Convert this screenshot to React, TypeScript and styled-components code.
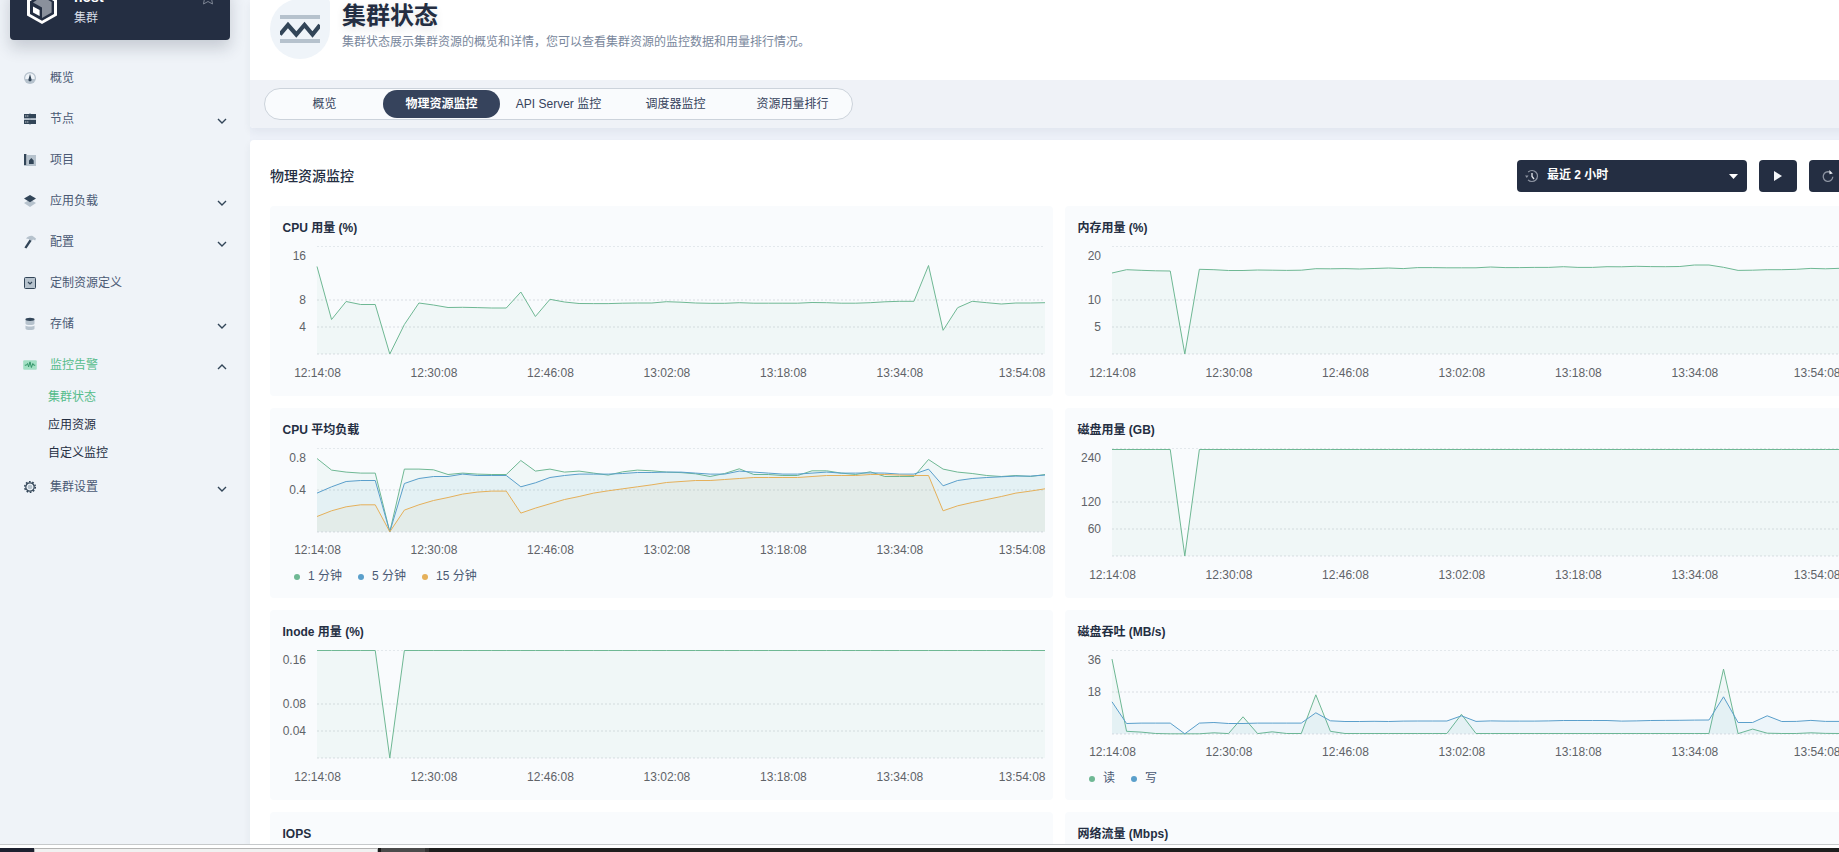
import React from "react";
import styled, { createGlobalStyle, css } from "styled-components";

const GlobalStyle = createGlobalStyle`
  * { box-sizing: border-box; }
  html, body { margin: 0; padding: 0; overflow: hidden; }
  body {
    background: #edf1f9;
    color: #242e42;
    font-family: "Liberation Sans", "Noto Sans CJK SC", sans-serif;
    font-size: 12px;
    line-height: 20px;
  }
`;

const Screen = styled.div`
  display: flex;
  flex-direction: column;
  width: 1839px;
  height: 852px;
  overflow: hidden;
`;

const Workspace = styled.div`
  display: flex;
  height: 844px;
  overflow: hidden;
`;

/* ---------- sidebar ---------- */

const Sidebar = styled.aside`
  flex: 0 0 250px;
  background: #eff3f8;
`;

const ClusterCard = styled.div`
  display: flex;
  align-items: flex-start;
  gap: 16px;
  width: 220px;
  height: 53px;
  margin: -13px 0 17px 10px;
  padding: 0 16px 0 16px;
  border-radius: 4px;
  background: #242e42;
  box-shadow: 0 8px 16px rgba(36, 46, 66, 0.2);
`;

const ClusterNames = styled.div`
  display: flex;
  flex: 1;
  flex-direction: column;
  color: #d8dde6;
  > strong { color: #fff; font-size: 14px; line-height: 20px; }
  > span { line-height: 22px; }
`;

const NavList = styled.nav`
  display: flex;
  flex-direction: column;
`;

const NavItem = styled.a<{ $active?: boolean }>`
  display: flex;
  align-items: center;
  height: 41px;
  padding: 0 23px 0 22px;
  color: ${(p) => (p.$active ? "#55bc8a" : "#4a5974")};
  > span { flex: 1; margin-left: 12px; }
`;

const SubNav = styled.div`
  display: flex;
  flex-direction: column;
  margin: -2px 0 -1px;
  padding-left: 48px;
`;

const SubItem = styled.a<{ $active?: boolean }>`
  height: 28px;
  line-height: 29px;
  color: ${(p) => (p.$active ? "#55bc8a" : "#242e42")};
`;

const ChevronSvg = styled.svg<{ $up?: boolean }>`
  margin-top: 4px;
  ${(p) => p.$up && css`transform: rotate(180deg);`}
`;

/* ---------- main ---------- */

const Main = styled.main`
  display: flex;
  flex: 0 0 1618px;
  flex-direction: column;
  gap: 12px;
`;

const Banner = styled.header`
  height: 128px;
  border-radius: 0 0 4px 4px;
  background: #fff;
  box-shadow: 0 4px 8px rgba(36, 46, 66, 0.06);
`;

const BannerTop = styled.div`
  display: flex;
  gap: 12px;
  height: 80px;
  padding-left: 20px;
`;

const BannerIcon = styled.div`
  display: flex;
  align-items: center;
  justify-content: center;
  width: 60px;
  height: 60px;
  margin-top: -1px;
  border-radius: 50% 4px 50% 50%;
  background: #eff4f9;
`;

const BannerText = styled.div`
  display: flex;
  flex-direction: column;
  > h1 {
    margin: 0;
    font-size: 24px;
    font-weight: 700;
    line-height: 32px;
    text-shadow: 0 4px 8px rgba(36, 46, 66, 0.12);
  }
  > p { margin: 0; color: #79879c; }
`;

const TabStrip = styled.div`
  height: 48px;
  padding: 8px 14px;
  border-radius: 0 0 4px 4px;
  background: #eff2f7;
`;

const TabGroup = styled.div`
  display: inline-flex;
  height: 32px;
  padding: 1px;
  border: 1px solid #ccd3db;
  border-radius: 16px;
  background: #f9fbfd;
`;

const Tab = styled.button<{ $active?: boolean }>`
  width: 117px;
  height: 28px;
  padding: 0;
  border: 0;
  border-radius: 14px;
  background: ${(p) => (p.$active ? "#36435c" : "transparent")};
  color: ${(p) => (p.$active ? "#fff" : "#36435c")};
  font: inherit;
  font-weight: ${(p) => (p.$active ? 700 : 400)};
`;

const Panel = styled.section`
  flex: 1;
  padding: 20px;
  border-radius: 4px;
  background: #fff;
  box-shadow: 0 4px 8px rgba(36, 46, 66, 0.06);
`;

const PanelHead = styled.div`
  display: flex;
  align-items: center;
  gap: 12px;
  height: 32px;
  margin-bottom: 14px;
  padding-right: 1px;
  > h2 { flex: 1; margin: 0; font-size: 14px; font-weight: 500; }
`;

const DarkButton = styled.button`
  display: flex;
  align-items: center;
  justify-content: center;
  width: 38px;
  height: 32px;
  padding: 0;
  border: 0;
  border-radius: 4px;
  background: #242e42;
`;

const RangeSelect = styled(DarkButton)`
  width: 230px;
  padding: 0 9px 0 8px;
  color: #fff;
  font: inherit;
  font-weight: 700;
  > span { flex: 1; margin: -2px 0 0 8px; text-align: left; }
`;

const ChartGrid = styled.div`
  display: grid;
  grid-template-columns: 783px 783px;
  grid-auto-rows: 190px;
  gap: 12px;
`;

const ChartCard = styled.article`
  border-radius: 4px;
  background: #f9fbfd;
  > h3 {
    height: 36px;
    margin: 0;
    padding: 12px 12.5px 0;
    font-size: 12px;
    font-weight: 600;
    line-height: 20px;
  }
  > svg { display: block; }
`;

const Tick = styled.text`
  fill: #5f6368;
  font-size: 12px;
`;

const Legend = styled.div`
  display: flex;
  gap: 16px;
  padding-left: 24px;
  line-height: 24px;
  color: #4a5974;
`;

const LegendItem = styled.span<{ $color: string }>`
  display: flex;
  align-items: center;
  gap: 8px;
  &::before {
    content: "";
    width: 6px;
    height: 6px;
    margin-top: 2px;
    border-radius: 50%;
    background: ${(p) => p.$color};
  }
`;

/* ---------- desktop strip ---------- */

const WindowEdge = styled.div`
  height: 4px;
  border-top: 1px solid #c6c9cb;
  background: #fff;
`;

const Taskbar = styled.div`
  display: flex;
  height: 4px;
  background: #1e1e1e;
`;

const TaskSlot = styled.div<{ $w: number; $bg: string; $edge?: boolean }>`
  width: ${(p) => p.$w}px;
  background: ${(p) => p.$bg};
  ${(p) => p.$edge && css`border: 1px solid #b4b4b4; border-bottom: 0;`}
`;

/* ---------- icons ---------- */

const DARK = "#324558";
const PALE = "#b6c2cd";

const Chevron = ({ up }: { up?: boolean }) => (
  <ChevronSvg $up={up} width="10" height="8" viewBox="0 0 10 8" fill="none">
    <path d="M1 2l4 4 4-4" stroke={DARK} strokeWidth="1.4" />
  </ChevronSvg>
);

const navIcons: Record<string, React.ReactNode> = {
  overview: (
    <>
      <circle cx="8" cy="8" r="6" fill={PALE} />
      <path d="M3.3 9a4.8 4.8 0 1 1 9.4 0z" fill="#eef3f8" />
      <path d="M8 4l1.5 5.2a1.6 1.6 0 1 1-3 0z" fill={DARK} />
    </>
  ),
  node: (
    <>
      <path d="M7 2h2v12H7z" fill={PALE} />
      <path d="M2 3h12v4.4H2zM2 8.8h12v4.2H2z" fill={DARK} />
      <path d="M3.3 4.6h1v1h-1zM5.3 4.6h1v1h-1zM3.3 10.4h1v1h-1zM5.3 10.4h1v1h-1z" fill="#fff" />
      <path d="M2 7.4h12v1.3H2z" fill={PALE} />
    </>
  ),
  project: (
    <>
      <path d="M5 3h9v11H2v-1h3z" fill={PALE} />
      <path d="M2 2h2.4v11H2zM7 8.5L9.3 6l2.4 2.5V12H7z" fill={DARK} />
    </>
  ),
  workload: (
    <>
      <path d="M8 6.5l6 3.6-6 3.9-6-3.9z" fill={PALE} />
      <path d="M8 2l6 3.6L8 9.2 2 5.6z" fill={DARK} />
    </>
  ),
  config: (
    <>
      <path d="M4 4.5C6 2 9 1.4 11 2.2l3 2.2-.8 2L11 5.4 9.6 7 7.4 5.2z" fill={PALE} />
      <path d="M7.6 5.6l1.9 1.4L4.4 14.6 2.4 13.4z" fill={DARK} />
    </>
  ),
  crd: (
    <>
      <rect x="2.5" y="2.5" width="11" height="11" rx="1" fill={PALE} stroke={DARK} />
      <path d="M6 7l2 2 2-2" fill="none" stroke={DARK} strokeWidth="1.2" />
    </>
  ),
  storage: (
    <>
      <path d="M3.5 4v3.5c0 2 9 2 9 0V4zM3.5 9.5v3c0 2 9 2 9 0v-3c-1 1.4-8 1.4-9 0z" fill={PALE} />
      <ellipse cx="8" cy="3.3" rx="4.6" ry="1.6" fill={DARK} />
    </>
  ),
  monitor: (
    <>
      <rect x="1.2" y="3.2" width="13.6" height="9.6" rx="1" fill="#a2e0c4" />
      <path d="M2.8 8.2h1.6l1.2-1.7 1 3.4 1.4-5 1.4 5.6 1.4-4 .9 1.7h1.5" fill="none" stroke="#329568" strokeWidth="1" />
    </>
  ),
  settings: (
    <>
      <circle cx="8" cy="8" r="5.3" fill="none" stroke={DARK} strokeWidth="1.5" strokeDasharray="1.7 1.63" />
      <circle cx="8" cy="8" r="4.2" fill="#eff4f9" stroke={DARK} strokeWidth="1.2" />
      <circle cx="8" cy="8" r="2.3" fill={PALE} />
    </>
  ),
};

const ClusterLogo = () => (
  <svg width="32" height="40" viewBox="0 0 32 40">
    <path d="M16 4l15 8.4v16.2L16 37 1 28.6V12.4z" fill="#fff" />
    <path d="M16 7.5l12 6.7v12.9l-12 6.7-12-6.7V14.2z" fill="#242e42" />
    <path d="M16 9.5l9.6 5.4v10.7L16 31V20.5l-9-5z" fill="#8a909c" />
    <path d="M7 19.5l6.6 3.5v6L7 25.6z" fill="#fff" />
  </svg>
);

const StarSvg = styled.svg`
  margin-top: 6px;
`;

const Star = () => (
  <StarSvg width="12" height="12" viewBox="0 0 12 12">
    <path d="M0 3.5h3.5M12 3.5H8.5M2.5 5.5L1.5 11 6 8.5l4.5 2.5-1-5.5" fill="none" stroke="#7d8594" />
  </StarSvg>
);

const BannerGlyph = () => (
  <svg width="40" height="40" viewBox="0 0 40 40">
    <path d="M0 6h40v4H0zM0 30h40v4H0z" fill={PALE} />
    <path d="M0 25.5L8 16l8.3 9.5L24.5 16l8 9.5L40 16" fill="none" stroke={DARK} strokeWidth="4.2" />
  </svg>
);

const HistoryIcon = () => (
  <svg width="14" height="14" viewBox="0 0 14 14" fill="none">
    <path d="M3.2 3A5.5 5.5 0 1 1 3 10.800" stroke="#8d94a2" strokeWidth="1.2" />
    <path d="M0 6.5h3.6L1.8 9z" fill="#8d94a2" />
    <path d="M7 4v3.5l2 2.5" stroke="#e6e9ee" strokeWidth="1.3" />
  </svg>
);

const CaretIcon = () => (
  <svg width="9" height="5" viewBox="0 0 9 5">
    <path d="M0 0h9L4.5 5z" fill="#fff" />
  </svg>
);

const PlayIcon = () => (
  <svg width="8" height="10" viewBox="0 0 8 10">
    <path d="M0 0l8 5-8 5z" fill="#f4f6f9" />
  </svg>
);

const RefreshIcon = () => (
  <svg width="12" height="14" viewBox="0 0 12 14" fill="none">
    <path d="M8 3.2A4.8 4.8 0 1 0 10.8 7.8" stroke="#8d94a2" strokeWidth="1.3" />
    <path d="M7.3 1l3.5 3.6-3.3.6z" fill="#e6e9ee" />
  </svg>
);

/* ---------- data ---------- */

const GREEN = "#6fb894";
const BLUE = "#5a9fcb";
const ORANGE = "#e5b05a";

type Series = { color: string; fill: string; points: number[] };
type ChartSpec = { title: string; ticks: string[]; series: Series[]; legend?: string[] };

const fillRun = (n: number, v: number) => Array.from({ length: n }, () => v);
const green = (points: number[]): Series => ({ color: GREEN, fill: "rgba(85,188,138,0.055)", points });
const blue = (points: number[]): Series => ({ color: BLUE, fill: "rgba(50,145,200,0.06)", points });
const orange = (points: number[]): Series => ({ color: ORANGE, fill: "rgba(229,176,60,0.06)", points });

const charts: ChartSpec[] = [
  {
    title: "CPU 用量 (%)",
    ticks: ["16", "8", "4"],
    series: [green([
      87.5, 34.5, 52.5, 49.5, 49.5, 0, 29.5, 51, 49, 46.5, 46.7, 46.4, 46, 46, 62, 37.5, 54.7, 52, 50.5, 50.4, 50.4,
      50.8, 51, 51, 52.3, 51.8, 51, 50.7, 50.7, 51.3, 50.8, 50.8, 50.8, 50.8, 51.5, 51.3, 50.8, 50.8, 51.3, 52.2,
      52.7, 52.7, 88.5, 23.7, 46.3, 52.7, 51.3, 50, 51, 51, 51.3,
    ])],
  },
  {
    title: "内存用量 (%)",
    ticks: ["20", "10", "5"],
    series: [green([
      81, 84.3, 83.7, 83.2, 83, 0, 84.7, 84.3, 83.5, 83.5, 84, 83.8, 83.6, 83.8, 85.3, 85.2, 85.4, 85, 85.5, 86, 85.4,
      86.4, 86.4, 86.2, 86.2, 86.2, 87, 86.4, 86.4, 86.6, 86.6, 87.3, 86.6, 86.6, 87.3, 87.2, 87.7, 87.4, 87.3,
      87.5, 89, 89, 86.7, 83.6, 83.8, 84.3, 84.3, 84.7, 85.6, 85.2, 85.7,
    ])],
  },
  {
    title: "CPU 平均负载",
    ticks: ["0.8", "0.4"],
    legend: ["1 分钟", "5 分钟", "15 分钟"],
    series: [
      green([
        73.3, 61.7, 59.7, 58.7, 58.7, 0, 62.7, 62.7, 62, 57.3, 58.7, 57.7, 57.3, 57.3, 71.3, 60.7, 62.7, 59.7, 60.7,
        58.7, 56.7, 60, 61.7, 61, 59.7, 59.2, 58, 55.3, 58.3, 63, 57.3, 57.3, 56.3, 56.3, 61, 61, 58.7, 57.3,
        60, 55.3, 55.3, 55.3, 72.3, 62.7, 59.7, 58.3, 56.3, 55.3, 56.3, 55.3, 57.3,
      ]),
      blue([
        38.7, 45, 50.3, 51.3, 51.3, 0, 48.3, 53.3, 55.3, 55.3, 57.7, 56.3, 56.3, 56.3, 45, 49, 54.3, 56.3, 57.7, 57.7,
        57.7, 58.3, 59.3, 59.3, 59.7, 59.7, 58.7, 57.7, 57.7, 60.7, 59.7, 58.7, 57.7, 57.7, 58.7, 59.7, 58.7, 58.7,
        58.9, 58.7, 57.7, 57.7, 62.7, 46, 51.3, 53.3, 54.3, 55, 55.7, 55.7, 56.7,
      ]),
      orange([
        15.3, 21, 25, 27, 27, 0, 21.7, 27, 31.3, 34.3, 37.7, 39.7, 40.7, 40.7, 18.7, 23.7, 28, 32.3, 35.3, 38.7, 41,
        43, 45, 47, 49.3, 50.3, 51.3, 51.3, 52.3, 53.3, 54.3, 54.3, 54.3, 54.3, 55.3, 56.3, 56.3, 56.3, 57.3, 57.3,
        56.7, 56.3, 56.3, 21, 26, 29.3, 32.3, 35.3, 38.7, 40.7, 43,
      ]),
    ],
  },
  {
    title: "磁盘用量 (GB)",
    ticks: ["240", "120", "60"],
    series: [green([...fillRun(5, 106.5), 0, ...fillRun(45, 106.5)])],
  },
  {
    title: "Inode 用量 (%)",
    ticks: ["0.16", "0.08", "0.04"],
    series: [green([...fillRun(5, 107.5), 0, ...fillRun(45, 107.5)])],
  },
  {
    title: "磁盘吞吐 (MB/s)",
    ticks: ["36", "18"],
    legend: ["读", "写"],
    series: [
      green([
        74.7, 2.5, 1.7, 0.3, 0, 0, 0, 1, 0.2, 17, 0.2, 2, 0.3, 0.3, 39, 2.5, ...fillRun(8, 0.3), 19.5,
        ...fillRun(17, 0.3), 64.7, 0.2, 4.7, 0.6, 0.3, 0.3, 1, 0.4, 0.3,
      ]),
      blue([
        32, 10.3, 10.7, 10.7, 10.7, 0, 10.7, 11.3, 10.3, 10.3, 10.7, 10.7, 10.7, 10.7, 21, 13, 12.3, 12.3, 12.5, 12.3,
        12.7, 12.8, 12.8, 12.8, 18, 12.4, 12.9, 12.7, 12.7, 12.7, 12.9, 13.3, 13.3, 13.3, 13.3, 12.7, 12.9, 13.3, 13.4,
        13.5, 13.7, 13.8, 37, 11.3, 11.3, 18, 12.3, 12.4, 13.4, 12.4, 12.4,
      ]),
    ],
  },
  { title: "IOPS", ticks: [], series: [] },
  { title: "网络流量 (Mbps)", ticks: [], series: [] },
];

const LEFT = 47;
const RIGHT = 775;
const STEP = (RIGHT - LEFT) / 50;
const TOP = 4.5;
const timeLabels = ["12:14:08", "12:30:08", "12:46:08", "13:02:08", "13:18:08", "13:34:08"];

const AreaChart = ({ spec }: { spec: ChartSpec }) => {
  const base = spec.legend ? 87.8 : 112;
  const span = base - 4;
  const gridLines = spec.legend ? [TOP, 46, 88] : [TOP, 58, 85, 112];
  const tickY = spec.legend ? [14, 46] : [14, 58, 85];
  const labelY = spec.legend ? 110 : 135;
  const line = (s: Series) =>
    s.points.map((v, i) => `${i ? "L" : "M"}${(LEFT + i * STEP).toFixed(2)} ${(base - Math.min(v, span)).toFixed(1)}`).join("");
  return (
    <svg width="783" height={spec.legend ? 120 : 150}>
      {gridLines.map((y) => (
        <path key={y} d={`M${LEFT} ${y}H${RIGHT}`} stroke="#e3e8ec" strokeWidth={y === TOP ? 1 : 1.3} strokeDasharray="2 2" />
      ))}
      {spec.series.map((s) => (
        <g key={s.color}>
          <path d={`${line(s)}L${RIGHT} ${base}L${LEFT} ${base}Z`} fill={s.fill} />
          <path d={line(s)} fill="none" stroke={s.color} />
        </g>
      ))}
      {spec.ticks.map((t, i) => (
        <Tick key={t} x={LEFT - 11} y={tickY[i] + 4} textAnchor="end">{t}</Tick>
      ))}
      {timeLabels.map((t, i) => (
        <Tick key={t} x={LEFT + 0.5 + i * 8 * STEP} y={labelY} textAnchor="middle">{t}</Tick>
      ))}
      <Tick x={RIGHT + 0.5} y={labelY} textAnchor="end">13:54:08</Tick>
    </svg>
  );
};

type NavEntry = { icon: string; label: string; arrow?: boolean; children?: string[] };

const navEntries: NavEntry[] = [
  { icon: "overview", label: "概览" },
  { icon: "node", label: "节点", arrow: true },
  { icon: "project", label: "项目" },
  { icon: "workload", label: "应用负载", arrow: true },
  { icon: "config", label: "配置", arrow: true },
  { icon: "crd", label: "定制资源定义" },
  { icon: "storage", label: "存储", arrow: true },
  { icon: "monitor", label: "监控告警", arrow: true, children: ["集群状态", "应用资源", "自定义监控"] },
  { icon: "settings", label: "集群设置", arrow: true },
];

const tabs = ["概览", "物理资源监控", "API Server 监控", "调度器监控", "资源用量排行"];

export default function App() {
  return (
    <Screen>
      <GlobalStyle />
      <Workspace>
        <Sidebar>
          <ClusterCard>
            <ClusterLogo />
            <ClusterNames>
              <strong>host</strong>
              <span>集群</span>
            </ClusterNames>
            <Star />
          </ClusterCard>
          <NavList>
            {navEntries.map((n) => (
              <React.Fragment key={n.icon}>
                <NavItem $active={!!n.children}>
                  <svg width="16" height="16" viewBox="0 0 16 16">{navIcons[n.icon]}</svg>
                  <span>{n.label}</span>
                  {n.arrow && <Chevron up={!!n.children} />}
                </NavItem>
                {n.children && (
                  <SubNav>
                    {n.children.map((c, i) => <SubItem key={c} $active={i === 0}>{c}</SubItem>)}
                  </SubNav>
                )}
              </React.Fragment>
            ))}
          </NavList>
        </Sidebar>
        <Main>
          <Banner>
            <BannerTop>
              <BannerIcon><BannerGlyph /></BannerIcon>
              <BannerText>
                <h1>集群状态</h1>
                <p>集群状态展示集群资源的概览和详情，您可以查看集群资源的监控数据和用量排行情况。</p>
              </BannerText>
            </BannerTop>
            <TabStrip>
              <TabGroup>
                {tabs.map((t, i) => <Tab key={t} $active={i === 1}>{t}</Tab>)}
              </TabGroup>
            </TabStrip>
          </Banner>
          <Panel>
            <PanelHead>
              <h2>物理资源监控</h2>
              <RangeSelect>
                <HistoryIcon />
                <span>最近 2 小时</span>
                <CaretIcon />
              </RangeSelect>
              <DarkButton><PlayIcon /></DarkButton>
              <DarkButton><RefreshIcon /></DarkButton>
            </PanelHead>
            <ChartGrid>
              {charts.map((c) => (
                <ChartCard key={c.title}>
                  <h3>{c.title}</h3>
                  {c.series.length > 0 && <AreaChart spec={c} />}
                  {c.legend && (
                    <Legend>
                      {c.legend.map((l, i) => (
                        <LegendItem key={l} $color={c.series[i].color}>{l}</LegendItem>
                      ))}
                    </Legend>
                  )}
                </ChartCard>
              ))}
            </ChartGrid>
          </Panel>
        </Main>
      </Workspace>
      <WindowEdge />
      <Taskbar>
        <TaskSlot $w={34} $bg="#1d2130" />
        <TaskSlot $w={344} $bg="#f1f1f1" $edge />
        <TaskSlot $w={3} $bg="#1a1a1a" />
        <TaskSlot $w={44} $bg="#4b4b4b" />
        <TaskSlot $w={4} $bg="#333333" />
      </Taskbar>
    </Screen>
  );
}
